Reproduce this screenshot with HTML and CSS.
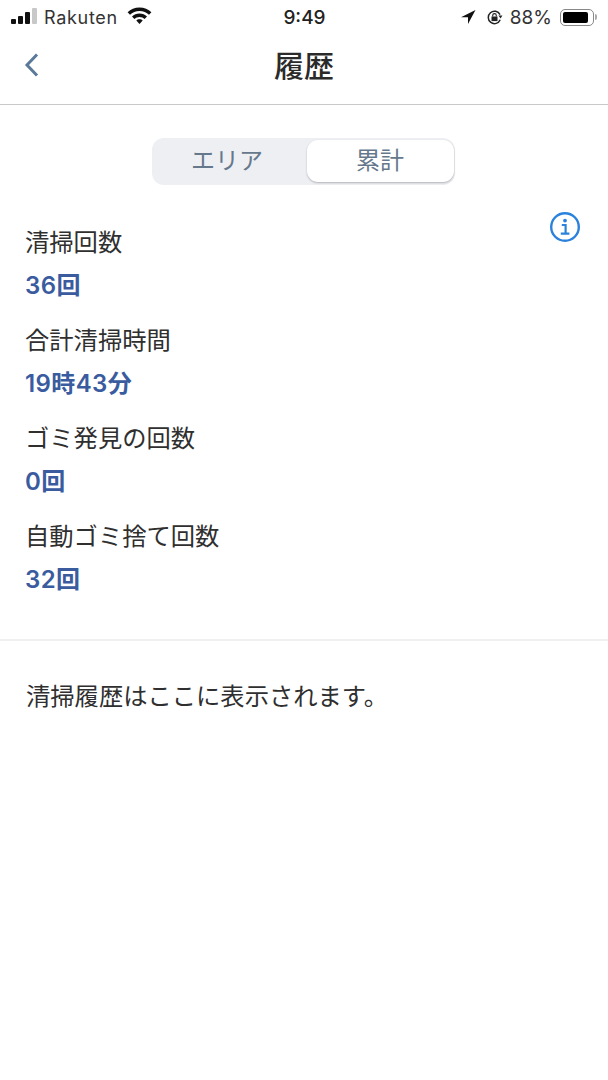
FILE: index.html
```html
<!DOCTYPE html>
<html lang="ja">
<head>
    <meta charset="UTF-8">
    <meta name="viewport" content="width=device-width, initial-scale=1.0">
    <title>履歴</title>
    <link rel="stylesheet" href="styles.css">
</head>
<body>
    <div class="statusbar">
        <div class="status-left">
            <div class="signal"><i></i><i></i><i></i><i class="off"></i></div>
            <span class="carrier">Rakuten</span>
            <svg class="wifi" width="25" height="18" viewBox="0 0 25 18">
                <path d="M12.5 0.5C7.8 0.5 3.6 2.3 0.6 5.3L3 7.8C5.4 5.4 8.8 3.9 12.5 3.9S19.6 5.4 22 7.8L24.4 5.3C21.4 2.3 17.2 0.5 12.5 0.5Z" fill="#111"/>
                <path d="M12.5 6.5C9.6 6.5 6.9 7.6 5 9.6L7.4 12C8.7 10.7 10.5 9.9 12.5 9.9S16.3 10.7 17.6 12L20 9.6C18.1 7.6 15.4 6.5 12.5 6.5Z" fill="#111"/>
                <path d="M12.5 12.2C11.2 12.2 10.1 12.7 9.3 13.6L12.5 17L15.7 13.6C14.9 12.7 13.8 12.2 12.5 12.2Z" fill="#111"/>
            </svg>
        </div>
        <div class="clock">9:49</div>
        <div class="status-right">
            <svg class="arrow" width="16" height="16" viewBox="0 0 16 16">
                <path d="M15.5 1L1 8.2H8V15Z" fill="#111"/>
            </svg>
            <svg class="lock" width="17" height="17" viewBox="0 0 17 17">
                <path d="M14.2 10.8A6.2 6.2 0 1 1 14 5.6" fill="none" stroke="#222" stroke-width="1.5"/>
                <path d="M16.4 6.6L12.4 6.6L14.6 9.6Z" fill="#222"/>
                <rect x="5.5" y="7.5" width="6" height="4.6" fill="#222"/>
                <path d="M6.7 7.5V6.4A1.8 1.8 0 0 1 10.3 6.4V7.5" fill="none" stroke="#222" stroke-width="1.1"/>
            </svg>
            <span class="percent">88%</span>
            <div class="battery"><div class="battery-level"></div></div>
            <div class="battery-cap"></div>
        </div>
    </div>

    <div class="navbar">
        <svg class="back" width="16" height="26" viewBox="0 0 16 26">
            <path d="M13 2.5L3 13L13 23.5" fill="none" stroke="#5b7a9a" stroke-width="3"/>
        </svg>
        <h1>履歴</h1>
    </div>

    <div class="tabs-wrap">
        <div class="tabs">
            <div class="tab">エリア</div>
            <div class="tab active">累計</div>
        </div>
    </div>

    <div class="stats">
        <svg class="info" width="32" height="32" viewBox="0 0 32 32">
            <circle cx="16" cy="16" r="13.8" fill="none" stroke="#2a82dc" stroke-width="2.4"/>
            <circle cx="16" cy="9.6" r="1.9" fill="#2a82dc"/>
            <path d="M12.8 14H16.6V22.4M11.8 22.6H20.4" fill="none" stroke="#2a82dc" stroke-width="2.2"/>
        </svg>
        <div class="stat">
            <p class="stat-label">清掃回数</p>
            <p class="stat-value">36回</p>
        </div>
        <div class="stat">
            <p class="stat-label">合計清掃時間</p>
            <p class="stat-value">19時43分</p>
        </div>
        <div class="stat">
            <p class="stat-label">ゴミ発見の回数</p>
            <p class="stat-value">0回</p>
        </div>
        <div class="stat">
            <p class="stat-label">自動ゴミ捨て回数</p>
            <p class="stat-value">32回</p>
        </div>
    </div>

    <p class="empty">清掃履歴はここに表示されます。</p>
</body>
</html>
```

FILE: styles.css
```css
body {
    font-family: "Inter", "Noto Sans CJK JP", sans-serif;
    background-color: #fff;
    color: #2b2b2b;
    margin: 0;
    padding: 0;
}

p {
    margin: 0;
}

/* Status bar */
.statusbar {
    display: grid;
    grid-template-columns: 1fr auto 1fr;
    align-items: center;
    height: 34px;
    padding: 0 11px;
    box-sizing: border-box;
}

.status-left,
.status-right {
    display: flex;
    align-items: center;
}

.status-right {
    justify-content: flex-end;
    padding-right: 0;
}

.signal {
    display: flex;
    align-items: flex-end;
    gap: 2px;
    height: 16px;
    margin-right: 7px;
    margin-bottom: 2px;
}

.signal i {
    display: block;
    width: 5px;
    background: #111;
    border-radius: 1px;
}

.signal i:nth-child(1) { height: 5px; }
.signal i:nth-child(2) { height: 8px; }
.signal i:nth-child(3) { height: 12px; }
.signal i:nth-child(4) { height: 16px; }

.signal i.off {
    background: #c8c8c8;
}

.carrier {
    font-size: 18px;
    letter-spacing: 0.7px;
    color: #333;
    margin-right: 9px;
}

.wifi {
    margin-bottom: 2px;
}

.clock {
    font-size: 19px;
    font-weight: 500;
    color: #222;
    margin-left: 1px;
}

.arrow {
    margin-right: 10px;
}

.lock {
    margin-right: 7px;
}

.percent {
    font-size: 19px;
    color: #333;
    margin-right: 8px;
}

.battery {
    width: 34px;
    height: 17px;
    box-sizing: border-box;
    border: 1px solid #888;
    border-radius: 5px;
    padding: 2px;
}

.battery-level {
    width: 88%;
    height: 100%;
    background: #000;
    border-radius: 2px;
}

.battery-cap {
    width: 2px;
    height: 6px;
    background: #aaa;
    margin-left: 1px;
    border-radius: 0 2px 2px 0;
}

/* Nav */
.navbar {
    display: flex;
    align-items: center;
    justify-content: center;
    position: relative;
    height: 60px;
    padding-bottom: 10px;
    border-bottom: 1px solid #c9c9cb;
}

.navbar h1 {
    margin: 0;
    font-size: 30px;
    font-weight: 500;
    color: #2a2a2a;
}

.back {
    position: absolute;
    left: 24px;
    top: 18px;
}

/* Segmented control */
.tabs-wrap {
    display: flex;
    justify-content: center;
    padding-top: 33px;
    padding-right: 1px;
}

.tabs {
    display: flex;
    width: 303px;
    height: 47px;
    box-sizing: border-box;
    padding: 2px 1px 3px 0;
    background: #eeeff3;
    border-radius: 12px;
}

.tab {
    flex: 1;
    display: flex;
    align-items: center;
    justify-content: center;
    box-sizing: border-box;
    padding: 0 5px 6px 0;
    font-size: 24px;
    color: #66788c;
}

.tab.active {
    flex: none;
    width: 147px;
    padding-right: 1px;
    background: #fff;
    border-radius: 11px;
    box-shadow: 0 1px 2px rgba(0, 0, 0, 0.25);
}

/* Totals */
.stats {
    position: relative;
    padding: 38px 25px 24px;
    border-bottom: 2px solid #f0f0f1;
}

.info {
    position: absolute;
    right: 27px;
    top: 26px;
}

.stat {
    height: 98px;
}

.stat-label {
    font-size: 24.3px;
    line-height: 38px;
    color: #2f2f2f;
}

.stat-value {
    font-size: 24px;
    letter-spacing: 0.4px;
    line-height: 50px;
    font-weight: 600;
    color: #3a5c9f;
}

/* History */
.empty {
    padding: 37px 26px;
    font-size: 24.3px;
    line-height: 36px;
    color: #2f2f2f;
}
```
